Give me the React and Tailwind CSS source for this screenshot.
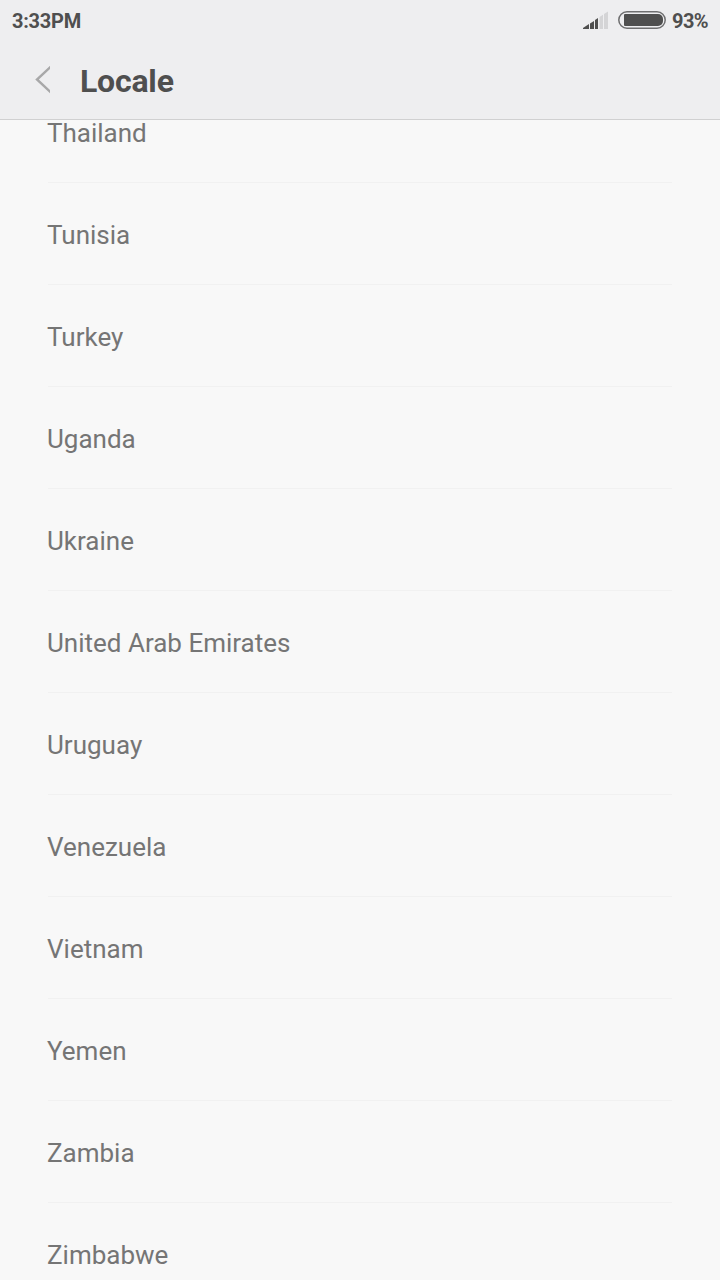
const countries = [
  'Thailand',
  'Tunisia',
  'Turkey',
  'Uganda',
  'Ukraine',
  'United Arab Emirates',
  'Uruguay',
  'Venezuela',
  'Vietnam',
  'Yemen',
  'Zambia',
  'Zimbabwe',
];

const StatusBar = () => (
  <div className="flex h-10 items-center justify-between px-3 font-bold text-[#4f4f4f]">
    <span className="pt-0.5 text-[20px] tracking-[-0.25px]">3:33PM</span>
    <div className="flex items-center">
      {/* Signal */}
      <svg className="mr-2.5" width="25" height="18" viewBox="0 0 25 18">
        <path d="M0 18 V17 L6 13 V18 Z M7 18 V12.5 L11 10 V18 Z M12 18 V9 L15 7 V18 Z" fill="#4f4f4f" />
        <path d="M16.5 18 V6 L20 3.8 V18 Z M21 18 V3 L25 0.5 V18 Z" fill="#d4d4d6" />
      </svg>
      {/* Battery */}
      <svg className="mr-1.5" width="48" height="18" viewBox="0 0 48 18">
        <rect x="0.8" y="0.8" width="46.4" height="16.4" rx="8.2" fill="none" stroke="#6f6f70" strokeWidth="1.5" />
        <rect x="6" y="3" width="39" height="12" rx="5" fill="#4f4f4f" />
        <rect x="6" y="3" width="20" height="12" rx="1" fill="#4f4f4f" />
      </svg>
      <span className="pt-0.5 text-[20px] tracking-[-0.6px]">93%</span>
    </div>
  </div>
);

const App = () => {
  return (
    <div className="flex h-screen flex-col overflow-hidden bg-[#f8f8f8] font-['Roboto',sans-serif]">
      <header className="h-[120px] shrink-0 border-b border-[#d0d0d1] bg-[#eeeef0]">
        <StatusBar />
        <div className="flex h-20 items-center pl-[35px]">
          <svg width="15" height="28" viewBox="0 0 15 28" fill="none" stroke="#a8a8a9" strokeWidth="2.4">
            <path d="M16 0.5 L2 13.5 L16 26.5" />
          </svg>
          <h1 className="ml-[30px] pt-px text-[32px] font-bold tracking-[-0.2px] text-[#4f4f4f]">Locale</h1>
        </div>
      </header>

      <main className="min-h-0 flex-1 overflow-hidden px-12">
        <ul className="-mt-[39px]">
          {countries.map((name) => (
            <li key={name} className="flex h-[102px] items-center border-b border-[#f1f1f1] pt-1 text-[26px] text-[#757575]">
              <span className="-ml-px">{name}</span>
            </li>
          ))}
        </ul>
      </main>
    </div>
  );
};

export default App;
